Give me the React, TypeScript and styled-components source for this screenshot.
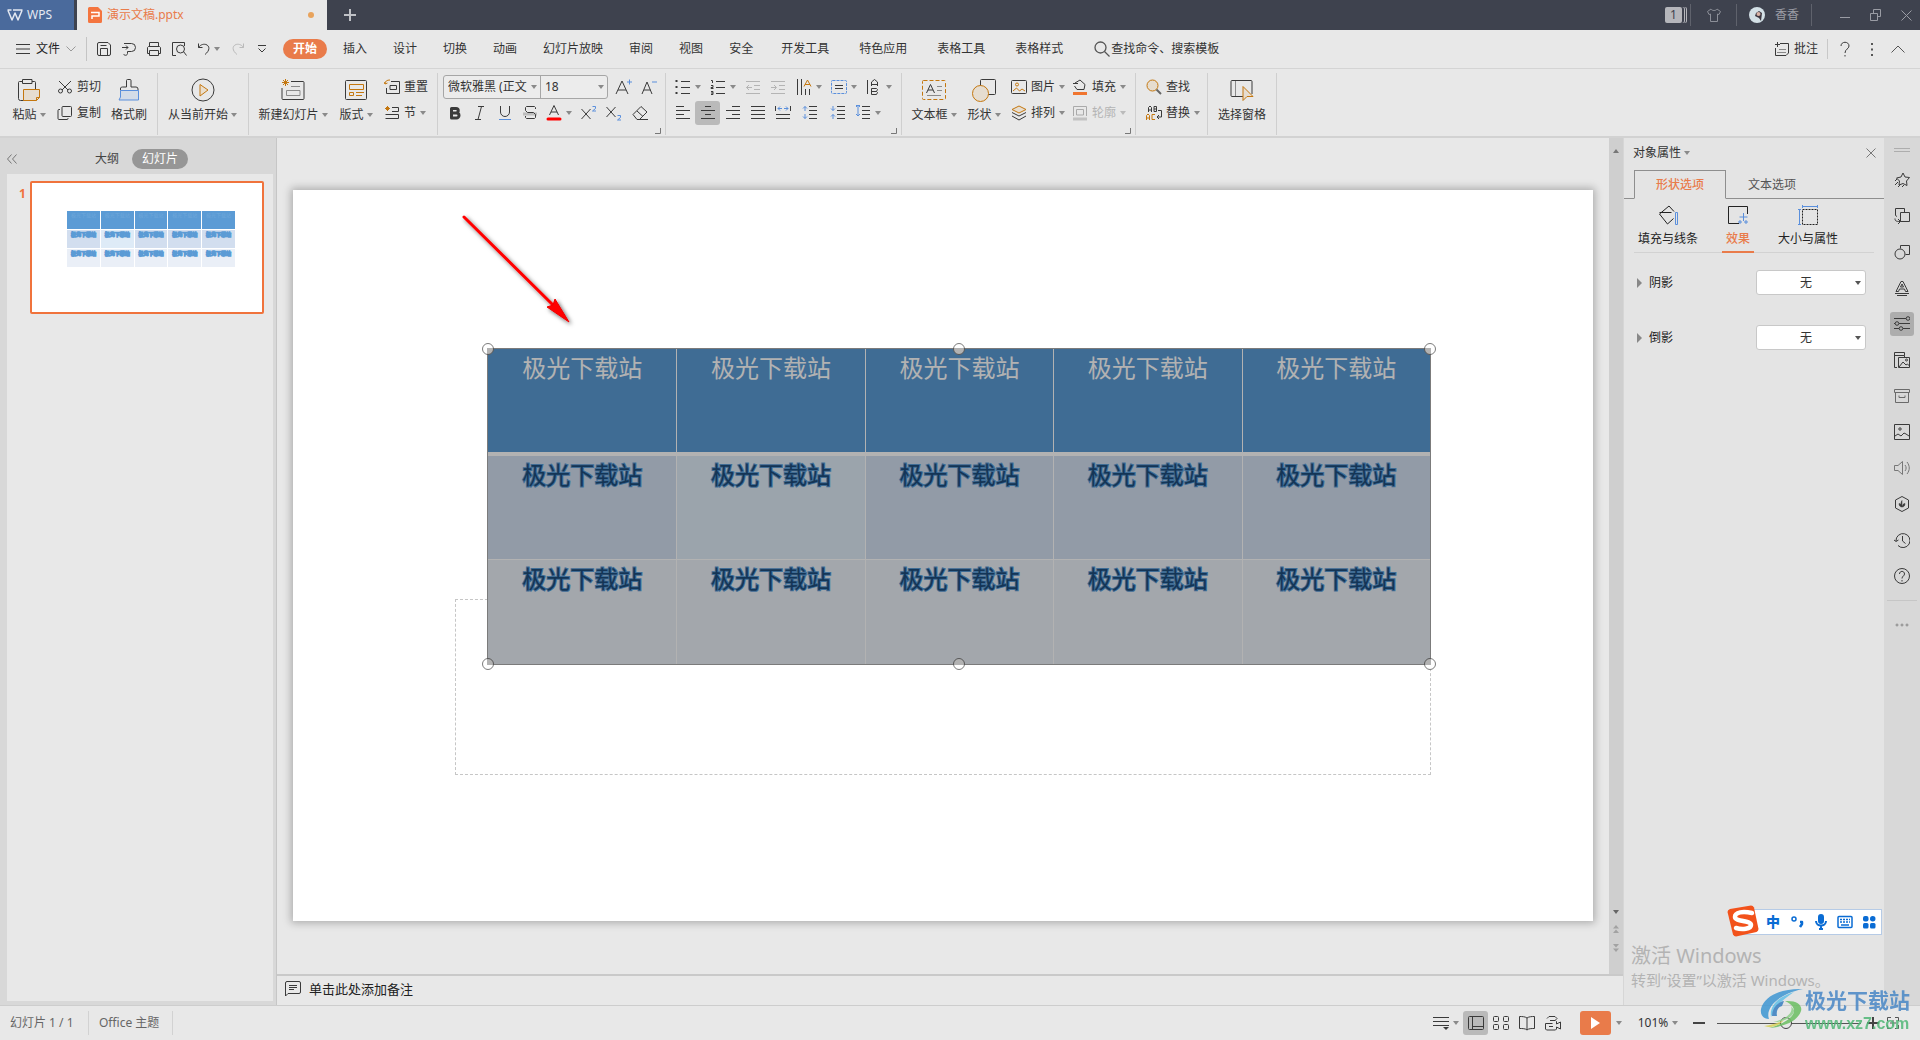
import React from 'react';
import styled, { createGlobalStyle, css } from 'styled-components';

const FONT = '"Noto Sans", "Noto Sans CJK SC", "Liberation Sans", sans-serif';
const INK = '#3a3a3a';
const ORANGE = '#e97b4a';
const AMBER = '#c4770f';
const BLUE = '#5a8fdc';

const Global = createGlobalStyle`
  *, *::before, *::after { box-sizing: border-box; }
  body { margin: 0; overflow: hidden; }
  button, select, input { font: inherit; color: inherit; }
  button { border: 0; padding: 0; background: none; cursor: pointer; }
  svg { display: block; flex: none; }
`;

/* ---------- icons ---------- */

type IconProps = { w?: number; h?: number; c?: string; sw?: number; children: React.ReactNode };
const Icon = ({ w = 16, h = w, c = INK, sw = 1, children }: IconProps) => (
  <svg width={w} height={h} viewBox={`0 0 ${w} ${h}`} fill="none" stroke={c} strokeWidth={sw} strokeLinejoin="round" aria-hidden="true">
    {children}
  </svg>
);

const Caret = ({ c = '#8a8a8a' }: { c?: string }) => (
  <svg width="6" height="4" viewBox="0 0 6 4" aria-hidden="true"><path d="M0 0h6L3 4z" fill={c} /></svg>
);
const Launcher = () => <Icon w={6} c="#777"><path d="M5.500 0v5.500H0" /></Icon>;

const PasteIcon = () => (
  <Icon w={24}>
    <path d="M8 22.500H3.500a2 2 0 0 1-2-2V4.500a1 1 0 0 1 1-1H5M15 3.500h2.500a1 1 0 0 1 1 1V11M5.500 1.500h9.500v4H5.500z" />
    <path d="M6.500 11.500h16v8l-3 3h-13z" stroke={AMBER} fill="#e6ddd0" /><path d="M22.500 19.500h-3v3" stroke={AMBER} />
  </Icon>
);
const CutIcon = () => <Icon><path d="M2 2l9 9M14 2L5 11" /><circle cx="3.500" cy="12" r="2" /><circle cx="12.500" cy="12" r="2" /></Icon>;
const CopyIcon = () => <Icon><path d="M6 1.500h7.500a1 1 0 0 1 1 1v8a1 1 0 0 1-1 1H6a1 1 0 0 1-1-1v-8a1 1 0 0 1 1-1z" /><path d="M3 4.500H2a1 1 0 0 0-1 1v8a1 1 0 0 0 1 1h8a1 1 0 0 0 1-1V13" /></Icon>;
const BrushIcon = () => (
  <Icon w={24}>
    <path d="M3.500 12.500V10a2 2 0 0 1 2-1H9.500V2.500a1 1 0 0 1 1-1h2.500a1 1 0 0 1 1 1V9h5a2 2 0 0 1 2 2v1.500" />
    <path d="M3.500 12.500h18v9.500H2l1.500-3z" stroke={BLUE} fill="#d3dce8" />
  </Icon>
);
const PlayIcon = () => <Icon w={24}><circle cx="12" cy="12" r="11" /><path d="M9 6.500v11.500l8-6z" stroke={AMBER} fill="#eadfce" /></Icon>;
const NewSlideIcon = () => (
  <Icon w={24}>
    <path d="M10 3.500h12a1 1 0 0 1 1 1v16a1 1 0 0 1-1 1H2a1 1 0 0 1-1-1V10" />
    <path d="M10 8.500h9M5.500 12.500h13.500v5H5.500z" stroke="#8b8b8b" />
    <path d="M4.500 1v7M1 4.500h7M2 2l5 5M7 2L2 7" stroke={AMBER} />
  </Icon>
);
const LayoutIcon = () => (
  <Icon w={24}><rect x="1.500" y="2.500" width="21" height="19" rx="1" /><path d="M5.500 6.500h14v5h-14zM5.500 14.500h4v3h-4zM12 14.500h8M12 17.500h6" stroke={AMBER} /></Icon>
);
const ResetIcon = () => <Icon><path d="M7 2.500h8.500v12h-13V9M6 6.500h6.500v4H6z" /><path d="M1 5c0-3 2-4 5-4M1 5L0 3M1 5l2.500-1" stroke={AMBER} /></Icon>;
const SectionIcon = () => <Icon><path d="M8 2.500h6.500v4H8M1.500 9.500h13v4h-13" /><path d="M3.500 1v5M1 3.500h5M2 2l3 3M5 2L2 5" stroke={AMBER} /></Icon>;

const BulletIcon = () => <Icon><path d="M6 2.500h9M6 8.500h9M6 14.500h9" /><path d="M1.500 1v2M1.500 7v2M1.500 13v2" strokeWidth="2" /></Icon>;
const NumberIcon = () => <Icon><path d="M6 2.500h9M6 8.500h9M6 14.500h9M1 1.500h1.500V4M1 6.500h2v2H1v1h2.500M1 12.500h2v3H1M1 14h2" /></Icon>;
const IndentIcon = ({ flip }: { flip?: boolean }) => (
  <Icon c="#b4b4b4"><path d="M1 2.500h14M9 6.500h6M9 10.500h6M1 14.500h14" />{flip ? <path d="M1 8.500h5M4 6l2.500 2.500L4 11" /> : <path d="M7 8.500H1.500M4 6L1.500 8.500 4 11" />}</Icon>
);
const TextDirIcon = () => <Icon><path d="M1.500 0v16M5.500 0v16M9.500 10v6M13.500 10v6" /><path d="M8 7.500l3.500-6.500L15 7.500M9 5.500h5" stroke={AMBER} /></Icon>;
const AlignBoxIcon = () => <Icon><rect x=".5" y="1.500" width="15" height="13" rx="1" stroke={BLUE} strokeDasharray="3 1" /><path d="M4 6.500h8M4 9.500h8" /></Icon>;
const AbIcon = () => <Icon><path d="M1.500 1v14M5.500 7V3L8.500.5l3 2.500v4M5.500 5.500h6M5.500 9.500h5l1 1-1 2 1 1-1 2h-5zM5.500 12.500h5" /></Icon>;
const linePaths: Record<string, string> = {
  left: 'M1 1.500h8M1 5.500h14M1 9.500h8M1 13.500h14',
  center: 'M5 1.500h6M1 5.500h14M5 9.500h6M1 13.500h14',
  right: 'M7 1.500h8M1 5.500h14M7 9.500h8M1 13.500h14',
  full: 'M1 1.500h14M1 5.500h14M1 9.500h14M1 13.500h14',
};
const LinesIcon = ({ kind }: { kind: string }) => <Icon><path d={linePaths[kind]} /></Icon>;
const DistributeIcon = () => <Icon><path d="M.5 1v5M15.500 1v5M1 9.500h14M1 13.500h14" /><path d="M7 3.500H3M5 1.500L3 3.500l2 2M9 3.500h4M11 1.500l2 2-2 2" stroke={BLUE} /></Icon>;
const SpacingIcon = ({ d }: { d: string }) => <Icon><path d="M7 1.500h8M7 5.500h8M7 9.500h8M7 13.500h8" /><path d={d} stroke={BLUE} /></Icon>;
const SPACE_OUT = 'M3 6V1.500M1 3.500L3 1.500l2 2M3 9v4.500M1 11.500l2 2 2-2';
const SPACE_IN = 'M3 1v4.500M1 3.500l2 2 2-2M3 14V9.500M1 11.500l2-2 2 2';
const SPACE_LINE = 'M3 0v11M1 2l2-2 2 2M1 9l2 2 2-2M1 .5h4';

const BoldIcon = () => <Icon sw={3}><path d="M4.500 3.500h4.500a2 2 0 0 1 0 4.500H4.500zM4.500 8h5a2 2 0 0 1 0 5H4.500z" /></Icon>;
const ItalicIcon = () => <Icon><path d="M6 1.500h6M3 14.500h6M9.500 1.500l-3.500 13" /></Icon>;
const UnderlineIcon = () => <Icon><path d="M3.500 1v6a4.500 4.500 0 0 0 9 0V1" /><path d="M2 14.500h12" stroke={BLUE} /></Icon>;
const StrikeIcon = () => (
  <Icon><path d="M1 9h14" stroke="#bdbdbd" strokeWidth="3" /><path d="M13.500 4V2.500l-1-1h-8l-1 1v3l2 2h6l2 2v3l-1 1h-8l-1-1V11" /></Icon>
);
const FontColorIcon = () => <Icon><path d="M3.500 10L8 .5 12.500 10M5 7h6" /><path d="M2 14h12" stroke="#f00" strokeWidth="3" strokeLinecap="round" /></Icon>;
const SupIcon = () => <Icon><path d="M.5 4l9 10M9.500 4l-9 10" /><path d="M11.500 1.500h3v2l-3 2.500h3.500" stroke={BLUE} /></Icon>;
const SubIcon = () => <Icon><path d="M.5 2l9 10M9.500 2l-9 10" /><path d="M11.500 10.500h3v2l-3 2.500h3.500" stroke={BLUE} /></Icon>;
const EraserIcon = () => <Icon><path d="M1 9.500l8-8 6 5.500-7.500 7.500H5zM5 6l6 5.500M5 14.500h11" /></Icon>;
const GrowIcon = () => <Icon w={18}><path d="M1 16L7 3l6 13M3 12h8" /><path d="M12 4h5M14.500 1.500v5" stroke={BLUE} /></Icon>;
const ShrinkIcon = () => <Icon w={18}><path d="M2 16L7 4l5 12M4 12h6.500" /><path d="M12 4h5" stroke={BLUE} /></Icon>;

const TextBoxIcon = () => (
  <Icon w={24}><rect x=".5" y="2.500" width="23" height="19" rx="1" stroke={AMBER} strokeDasharray="4 2" /><path d="M4.500 15L8.500 6.500l4 8.500M6 12h5" /><path d="M15 8.500h5M15 12.500h5M5 17.500h14" stroke="#8b8b8b" /></Icon>
);
const ShapesIcon = () => <Icon w={24}><rect x="8.500" y="1.500" width="15" height="15" rx="1" /><circle cx="8.500" cy="15.500" r="8" stroke={AMBER} fill="#e6ddd0" /></Icon>;
const PictureIcon = () => <Icon><rect x=".5" y="1.500" width="15" height="13" rx="1" /><path d="M2 12l3.500-3 3 3 2.500-2 3 2" stroke={AMBER} /><circle cx="6" cy="5.500" r="1.500" stroke={AMBER} /></Icon>;
const LayersIcon = () => <Icon><path d="M1 7.500L8 11l7-3.500M1 11L8 15l7-4" /><path d="M8 1L1 4.500 8 8l7-3.500z" stroke={AMBER} fill="#e6ddd0" /></Icon>;
const FillIcon = () => <Icon><path d="M3 4l5-3 5 4.500-1 5H5L2.500 7M1 4.500h5" /><path d="M1 14.500h14" stroke="#f0752f" strokeWidth="3" /></Icon>;
const OutlineIcon = () => <Icon c="#aaa"><path d="M1.500 11V1.500h13V11M4.500 10V4.500h7V10z" /><path d="M1 14h14" stroke="#c2c2c2" strokeWidth="3" /></Icon>;
const FindIcon = () => <Icon><circle cx="6.500" cy="6.500" r="5.500" stroke={AMBER} fill="#e6ddd0" /><path d="M10.500 10.500l4.500 4.500" strokeWidth="2" stroke="#666" /></Icon>;
const ReplaceIcon = () => (
  <Icon><path d="M2.500 7V2.500L4 1l1.500 1.500V7M2.500 5h3M8 1.500h2.500v5H8zM8 4h2.500M12 5.500h3.500V12H11M13 10l-2 2 2 2" /><path d="M.5 15v-4.500L2 9l1.500 1.500V15M.5 13h3M9 9.500H6v5h3" stroke={AMBER} /></Icon>
);
const PaneIcon = () => <Icon w={24}><path d="M13 18.500H2a1 1 0 0 1-1-1v-14a1 1 0 0 1 1-1h19a1 1 0 0 1 1 1V16" /><path d="M5.500 3v15" stroke="#8b8b8b" /><path d="M13 8.500v14l4-4h6z" stroke={AMBER} fill="#e6ddd0" /></Icon>;

/* ---------- shell ---------- */

const Shell = styled.div`
  position: relative;
  display: grid;
  grid-template-rows: 30px 39px 69px 1fr 35px;
  height: 100vh;
  min-width: 1280px;
  overflow: hidden;
  background: #e8e8e8;
  color: #333;
  font: 12px/16px ${FONT};
`;

const TitleBar = styled.header`
  display: flex;
  background: #3e424e;
`;
const HomeTab = styled.button`
  display: flex;
  align-items: center;
  gap: 4px;
  width: 74px;
  margin-right: 3px;
  padding-left: 7px;
  background: #4a6a9c;
  color: #e4e9f2;
`;
const DocTab = styled.div`
  display: flex;
  align-items: center;
  gap: 5px;
  width: 250px;
  padding: 0 13px 0 11px;
  background: #e8e8e8;
  color: ${ORANGE};
`;
const Unsaved = styled.span`
  width: 6px;
  height: 6px;
  margin-left: auto;
  border-radius: 50%;
  background: #e8a35c;
`;
const NewTab = styled.button`
  display: grid;
  place-items: center;
  width: 46px;
`;
const TitleRight = styled.div`
  display: flex;
  align-items: center;
  margin-left: auto;
  color: #9a9ca4;
`;
const WindowControls = styled.div`
  display: flex;
  padding-left: 18px;
`;
const TitleItem = styled.button<{ $w: number; $rule?: boolean }>`
  display: flex;
  align-items: center;
  justify-content: center;
  gap: 10px;
  width: ${p => p.$w}px;
  height: 22px;
  border-right: ${p => (p.$rule ? '1px solid #5f626c' : '0')};
`;
const CountBadge = styled.span`
  display: flex;
  align-items: center;
  justify-content: center;
  width: 17px;
  height: 16px;
  border-radius: 2px;
  background: #b5b6bb;
  box-shadow: 2px 0 0 #3e424e, 3px 0 0 #b5b6bb, 4px 0 0 #3e424e, 5px 0 0 #b5b6bb;
  color: #3e424e;
`;

const MenuBar = styled.nav`
  display: flex;
  align-items: center;
  padding: 0 8px 0 15px;
  border-bottom: 1px solid #d4d4d4;
`;
const FileButton = styled.button`
  display: flex;
  align-items: center;
  gap: 6px;
  width: 72px;
  height: 24px;
  color: #222;
  border-right: 1px solid #c4c4c4;
`;
const QuickTools = styled.div`
  display: flex;
  padding-left: 4px;
`;
const QuickButton = styled.button<{ $w?: number }>`
  display: flex;
  align-items: center;
  justify-content: center;
  gap: 3px;
  width: ${p => p.$w ?? 25}px;
  height: 24px;
`;
const Tabs = styled.div`
  display: flex;
  flex: 1;
  align-items: center;
  padding-left: 9px;
`;
const MenuTab = styled.button<{ $wide?: boolean; $on?: boolean }>`
  height: 20px;
  padding: 0 ${p => (p.$wide ? 15 : 13)}px;
  white-space: nowrap;
  line-height: 20px;
  ${p => p.$on && css`
    margin-right: 3px;
    padding: 0 10px;
    border-radius: 10px;
    background: ${ORANGE};
    color: #fff;
    font-weight: 700;
  `}
`;
const SearchBox = styled.label`
  display: flex;
  align-items: center;
  gap: 1px;
  margin-left: 16px;
`;
const SearchInput = styled.input`
  width: 130px;
  padding: 0;
  border: 0;
  outline: 0;
  background: none;
  &::placeholder { color: #333; opacity: 1; }
`;
const CommentButton = styled.button`
  display: flex;
  align-items: center;
  gap: 4px;
  height: 20px;
  padding-right: 9px;
  margin-right: 2px;
  border-right: 1px solid #c8c8c8;
`;

/* ---------- ribbon ---------- */

const Ribbon = styled.div`
  display: flex;
  padding-top: 4px;
  border-bottom: 2px solid #d2d2d2;
`;
const Group = styled.section<{ $w: number; $l?: number }>`
  position: relative;
  display: flex;
  flex: none;
  width: ${p => p.$w}px;
  height: 62px;
  padding: 2px 0 0 ${p => p.$l ?? 8}px;
  border-right: 1px solid #cfcfcf;
`;
const Corner = styled.button`
  position: absolute;
  right: 4px;
  bottom: 1px;
`;
const Big = styled.button<{ $w: number }>`
  display: flex;
  flex-direction: column;
  align-items: center;
  gap: 5px;
  width: ${p => p.$w}px;
  padding-top: 3px;
`;
const Label = styled.span`
  display: flex;
  align-items: center;
  gap: 3px;
  white-space: nowrap;
`;
const Stack = styled.div<{ $w?: number; $l?: number }>`
  display: flex;
  flex-direction: column;
  gap: 2px;
  width: ${p => (p.$w ? `${p.$w}px` : 'auto')};
  padding-left: ${p => p.$l ?? 0}px;
`;
const Row = styled.div`
  display: flex;
  align-items: center;
  height: 24px;
`;
const Small = styled.button<{ $off?: boolean }>`
  display: flex;
  align-items: center;
  gap: 4px;
  height: 24px;
  white-space: nowrap;
  color: ${p => (p.$off ? '#b4b4b4' : 'inherit')};
`;
const Tool = styled.button<{ $w?: number; $on?: boolean }>`
  display: flex;
  align-items: center;
  justify-content: center;
  gap: 4px;
  flex: none;
  width: ${p => p.$w ?? 25}px;
  height: 24px;
  border-radius: 3px;
  background: ${p => (p.$on ? '#bababa' : 'none')};
`;
const Combo = styled.div`
  display: flex;
  width: 165px;
  height: 24px;
  margin-right: 3px;
  border: 1px solid #a6a6a6;
  border-radius: 3px;
  background: #ececec;
`;
const ComboPart = styled.label<{ $w: number; $rule?: boolean }>`
  display: flex;
  align-items: center;
  width: ${p => p.$w}px;
  padding: 0 3px 0 4px;
  border-right: ${p => (p.$rule ? '1px solid #a6a6a6' : '0')};
`;
const PlainSelect = styled.select<{ $center?: boolean }>`
  flex: 1;
  min-width: 0;
  height: 20px;
  padding: 0;
  border: 0;
  outline: 0;
  appearance: none;
  background: none;
  text-align: ${p => (p.$center ? 'center' : 'left')};
  text-align-last: ${p => (p.$center ? 'center' : 'left')};
`;

/* ---------- workspace ---------- */

const Work = styled.main`
  display: grid;
  grid-template-columns: 277px minmax(0, 1fr) 261px 36px;
  min-height: 0;
`;
const Outline = styled.aside`
  display: flex;
  flex-direction: column;
  padding: 0 3px 4px 7px;
  border-right: 1px solid #c6c6c6;
  background: #d8d8d8;
`;
const OutlineHead = styled.div`
  display: flex;
  align-items: center;
  gap: 3px;
  height: 36px;
  padding-top: 6px;
`;
const OutlineTab = styled.button<{ $on?: boolean }>`
  height: 20px;
  padding: 0 10px;
  border-radius: 10px;
  background: ${p => (p.$on ? '#969696' : 'none')};
  color: ${p => (p.$on ? '#fff' : '#444')};
`;
const Collapse = styled.button`
  margin-right: 65px;
`;
const ThumbList = styled.div`
  display: flex;
  flex: 1;
  gap: 4px;
  align-items: flex-start;
  padding: 7px 9px 0 12px;
  background: #e8e8e8;
  color: #f0733c;
  font-weight: 700;
`;
const ThumbNo = styled.span`
  width: 7px;
  padding-top: 5px;
`;
const Thumb = styled.button`
  display: flex;
  align-items: flex-start;
  flex: 1;
  height: 133px;
  border: 2px solid #f0733c;
  border-radius: 2px;
  background: #fff;
  padding: 28px 27px 0 35px;
`;
const MiniTable = styled.span`
  display: grid;
  flex: 1;
  grid-template-columns: repeat(5, minmax(0, 1fr));
  grid-auto-rows: 18px;
  gap: 1px;
`;
const MiniCell = styled.span<{ $bg: string; $head?: boolean }>`
  overflow: hidden;
  background: ${p => p.$bg};
  color: ${p => (p.$head ? '#6ea7da' : '#5b9bd5')};
  font-size: 5px;
  line-height: 8px;
  text-align: center;
  white-space: nowrap;
  font-weight: ${p => (p.$head ? 400 : 900)};
  -webkit-text-stroke: ${p => (p.$head ? '0' : '1px #5b9bd5')};
`;

const Center = styled.section`
  display: grid;
  grid-template-rows: minmax(0, 1fr) 31px;
`;
const Stage = styled.div`
  display: grid;
  grid-template-columns: minmax(0, 1fr) 14px;
`;
const Desk = styled.div`
  display: flex;
  align-items: center;
  justify-content: center;
  padding: 0 16px 2px;
`;
const Slide = styled.div`
  position: relative;
  width: 100%;
  aspect-ratio: 1300 / 731;
  background: #fff;
  box-shadow: 0 0 8px 2px rgba(0, 0, 0, 0.26);
`;
const pct = (v: number, of: number) => `${(v / of) * 100}%`;
const Floating = styled.div<{ $x: number; $y: number; $w: number; $h: number }>`
  position: absolute;
  left: ${p => pct(p.$x, 1300)};
  top: ${p => pct(p.$y, 731)};
  width: ${p => pct(p.$w, 1300)};
  height: ${p => pct(p.$h, 731)};
`;
const Placeholder = styled(Floating)`
  border: 1px dashed #c6c6c6;
`;
const Selection = styled(Floating)`
  border: 1px solid #b0b0b0;
  &::after {
    content: '';
    position: absolute;
    inset: -1px;
    background: rgba(0, 0, 0, 0.3);
    pointer-events: none;
  }
`;
const Handle = styled.span<{ $x: number; $y: number }>`
  position: absolute;
  left: ${p => p.$x}%;
  top: ${p => p.$y}%;
  width: 12px;
  height: 12px;
  margin: -6px 0 0 -6px;
  border: 1px solid #7c7c7c;
  border-radius: 50%;
  background: #fff;
`;
const SlideTable = styled.table`
  width: 100%;
  height: 100%;
  table-layout: fixed;
  border-spacing: 0;
  font-size: 24px;
  line-height: 34px;
`;
const HeadCell = styled.th`
  height: 34%;
  padding: 2px 0 0;
  vertical-align: top;
  border-bottom: 4px solid #fff;
  background: #5b9bd5;
  color: #fff;
  font-weight: 400;
  & + & { border-left: 1px solid #fff; }
`;
const BodyCell = styled.td<{ $bg: string }>`
  height: 33%;
  padding: 2px 0 0;
  vertical-align: top;
  text-align: center;
  border-bottom: 1px solid #fff;
  background: ${p => p.$bg};
  color: #1d4d7c;
  -webkit-text-stroke: 2px #5b9bd5;
  paint-order: stroke fill;
  & + & { border-left: 1px solid #fff; }
  tr:last-child > & { border-bottom: 0; }
`;
const Scroll = styled.div`
  display: flex;
  flex-direction: column;
  align-items: center;
  gap: 11px;
  padding: 11px 0 22px;
  background: #cfcfcf;
`;
const ScrollButton = styled.button<{ $end?: boolean }>`
  margin-top: ${p => (p.$end ? 'auto' : '0')};
`;
const Notes = styled.label`
  display: flex;
  align-items: center;
  gap: 8px;
  padding: 0 8px 4px;
  border-top: 2px solid #c9c9c9;
`;
const NotesInput = styled.input`
  flex: 1;
  padding: 0;
  border: 0;
  outline: 0;
  background: none;
  font-size: 13px;
  &::placeholder { color: #222; opacity: 1; }
`;

const Props = styled.aside`
  border-left: 1px solid #d6d6d6;
  background: #e4e4e4;
`;
const PropsHead = styled.div`
  display: flex;
  align-items: center;
  justify-content: space-between;
  height: 32px;
  padding: 0 8px 2px 9px;
`;
const PropsTabs = styled.div`
  display: flex;
  height: 29px;
  padding-left: 10px;
  box-shadow: inset 0 -1px #8e8e8e;
`;
const PropsTab = styled.button<{ $on?: boolean }>`
  width: 92px;
  border: 1px solid ${p => (p.$on ? '#8e8e8e' : 'transparent')};
  border-bottom-color: ${p => (p.$on ? '#e4e4e4' : 'transparent')};
  color: ${p => (p.$on ? ORANGE : '#555')};
  font-weight: ${p => (p.$on ? 500 : 400)};
`;
const SubTabs = styled.div`
  display: flex;
  justify-content: space-between;
  height: 54px;
  margin: 0 10px;
  padding: 0 36px 0 4px;
  border-bottom: 1px solid #d2d2d2;
`;
const SubTab = styled.button<{ $on?: boolean }>`
  display: flex;
  flex-direction: column;
  align-items: center;
  gap: 6px;
  height: 54px;
  padding: 6px 4px 0;
  margin: 0 -4px;
  border-bottom: 2px solid ${p => (p.$on ? ORANGE : 'transparent')};
  color: ${p => (p.$on ? ORANGE : '#222')};
  font-weight: ${p => (p.$on ? 500 : 400)};
`;
const PropRow = styled.div`
  display: flex;
  align-items: center;
  justify-content: space-between;
  height: 25px;
  margin: 17px 18px 30px 13px;
`;
const PropLabel = styled.label`
  display: flex;
  align-items: center;
  gap: 7px;
  color: #222;
`;
const PropSelect = styled.div`
  display: flex;
  align-items: center;
  width: 110px;
  height: 25px;
  padding: 0 4px 0 0;
  border: 1px solid #c8c8c8;
  border-radius: 3px;
  background: #fff;
`;

const Rail = styled.aside`
  display: flex;
  flex-direction: column;
  align-items: center;
  gap: 12px;
  padding-top: 10px;
  background: #d8d8d8;
`;
const RailButton = styled.button<{ $on?: boolean }>`
  display: grid;
  place-items: center;
  width: 24px;
  height: 24px;
  border-radius: 3px;
  background: ${p => (p.$on ? '#adadad' : 'none')};
`;
const RailGrip = styled.span`
  width: 16px;
  height: 4px;
  margin-bottom: 4px;
  border: solid #adadad;
  border-width: 1px 0;
`;
const RailRule = styled.span`
  width: 30px;
  height: 1px;
  background: #c6c6c6;
`;

const Status = styled.footer`
  display: flex;
  align-items: center;
  padding-right: 15px;
  border-top: 1px solid #cdcdcd;
  color: #666;
`;
const StatusText = styled.span<{ $w: number }>`
  width: ${p => p.$w}px;
  height: 24px;
  padding-left: 10px;
  line-height: 24px;
  border-right: 1px solid #d2d2d2;
`;
const StatusTools = styled.div`
  display: flex;
  align-items: center;
  margin-left: auto;
  color: #333;
`;
const ShowButton = styled.button`
  display: grid;
  place-items: center;
  width: 31px;
  height: 24px;
  margin: 0 0 0 13px;
  border-radius: 3px;
  background: ${ORANGE};
`;
const ZoomSlider = styled.input`
  width: 144px;
  height: 14px;
  margin: 0 4px 0 8px;
  appearance: none;
  background: linear-gradient(#555, #555) center / 100% 1px no-repeat;
  &::-webkit-slider-thumb {
    appearance: none;
    width: 12px;
    height: 12px;
    border: 1px solid #444;
    border-radius: 50%;
    background: #e8e8e8;
  }
`;

/* ---------- desktop overlays ---------- */

const Activate = styled.div`
  position: absolute;
  right: 96px;
  bottom: 48px;
  width: 193px;
  color: #b3b3b3;
  font-size: 15px;
  line-height: 24px;
  white-space: nowrap;
  pointer-events: none;
`;
const ActivateTitle = styled.div`
  font-size: 20px;
`;
const Ime = styled.div`
  position: absolute;
  right: 38px;
  bottom: 105px;
  display: flex;
  align-items: center;
  height: 26px;
  padding-left: 20px;
  border: 1px solid #b6cbe6;
  background: #fff;
  color: #0a6cd4;
`;
const ImeLogo = styled.span`
  position: absolute;
  left: -14px;
  top: -5px;
`;
const ImeButton = styled.button`
  display: grid;
  place-items: center;
  width: 24px;
  height: 24px;
  font-size: 14px;
  font-weight: 900;
`;
const Stamp = styled.div`
  position: absolute;
  right: 10px;
  bottom: 6px;
  display: flex;
  pointer-events: none;
  opacity: 0.86;
`;
const StampName = styled.div`
  color: #4a88c6;
  font-size: 21px;
  line-height: 24px;
  font-weight: 700;
  white-space: nowrap;
`;
const StampUrl = styled.div`
  padding-top: 2px;
  color: #52b878;
  font: 700 16px/20px "Liberation Sans", sans-serif;
`;

/* ---------- data ---------- */

const MENU = ['插入', '设计', '切换', '动画', '幻灯片放映', '审阅', '视图', '安全'];
const WIDE_MENU = ['开发工具', '特色应用', '表格工具', '表格样式'];
const COLS = [0, 1, 2, 3, 4];
const CELL = '极光下载站';
const bandColor = (row: number, col: number) => (row === 1 ? '#eaeff7' : col === 1 ? '#deebf7' : '#d2deef');

const RAIL: { name: string; on?: boolean; icon: React.ReactNode }[] = [
  { name: '动画', icon: <Icon><path d="M9 1l2 4 4.500.5-3 3.500.5 4.500L9 11.500 5 13l.5-4L2.500 6l4.500-1zM1 9l2-2M1 13l3-3M4 15l2-2M8 15l2-2" /></Icon> },
  { name: '切换', icon: <Icon><path d="M3 8.500l-1.500-1v-7h9V4M6.500 4.500h9v9h-9zM1 10.500c0 2.500 1 3 5 3M4 11l2.500 2.500L4 16" /></Icon> },
  { name: '形状', icon: <Icon><path d="M6.500 4.500v-3h9v9h-4" /><circle cx="6" cy="10" r="5" /></Icon> },
  { name: '艺术字', icon: <Icon><path d="M2 11.500L7 1.500h2l5 10h-2.500L10.500 9h-5l-1 2.500zM6.500 7h3L8 4zM1 13.500h14M3 15.500h10" /></Icon> },
  { name: '属性', on: true, icon: <Icon><path d="M0 2.500h12M5 7.500h11M0 12.500h5M9 12.500h7M0 7.500h1" /><circle cx="14" cy="2.500" r="1.800" /><circle cx="3" cy="7.500" r="1.800" /><circle cx="7" cy="12.500" r="1.800" /></Icon> },
  { name: '模板', icon: <Icon><path d="M3 15.500H.5V.5h10v3H.5M10.500 3.500V5M4.500 5.500h11v10h-11zM5 15l4-5 3 3 1.500-1 2 2" /><circle cx="12.500" cy="8" r="1" /></Icon> },
  { name: '归档', icon: <Icon c="#6a6a6a"><path d="M.5 1.500h15v3H.5zM1.500 4.500v10h13v-10M5 7.500v2h6v-2" /></Icon> },
  { name: '图片', icon: <Icon><path d="M.5.5h15v15H.5zM1 12l3-2 3 2 3-3 2 1 3 2" /><circle cx="6" cy="5" r="1.200" /></Icon> },
  { name: '音频', icon: <Icon c="#777"><path d="M.5 5.500H4l4.500-4v13L4 10.500H.500zM11 5c1.500 2 1.500 4 0 6M13 2c3 4 3 8 0 12" /></Icon> },
  { name: '资源', icon: <Icon><path d="M8 .5l6.500 3.500v8L8 15.500 1.500 12V4z" /><path d="M8 11V4.500c-1.500 2-1 4 0 6.500M8 11C7.500 8.500 6.500 7.500 5 7.500c0 2 1 3.500 3 3.500zM8 11c.5-2.500 1.500-3.500 3-3.500 0 2-1 3.500-3 3.500z" fill={INK} strokeWidth=".5" /></Icon> },
  { name: '历史', icon: <Icon><path d="M2 9a7 7 0 1 1 2 4.500M0 8l2 1.500L4.500 8M8.500 4v5l3 2.500" /></Icon> },
  { name: '帮助', icon: <Icon><circle cx="8" cy="8" r="7.500" /><path d="M5.500 6c0-3.500 5-3.500 5 0 0 2-2.500 2-2.500 4.500M8 12v1.500" /></Icon> },
];

/* ---------- parts ---------- */

const BigButton = ({ w, icon, label, caret }: { w: number; icon: React.ReactNode; label: string; caret?: boolean }) => (
  <Big $w={w}>{icon}<Label>{label}{caret && <Caret />}</Label></Big>
);
const SmallButton = ({ icon, label, caret, off }: { icon: React.ReactNode; label: string; caret?: boolean; off?: boolean }) => (
  <Small $off={off}>{icon}{label}{caret && <Caret c={off ? '#bbb' : undefined} />}</Small>
);

function Title() {
  return (
    <TitleBar>
      <HomeTab>
        <Icon w={16} h={12} c="#e4e9f2" sw={1.5}><path d="M.5 1h4M1 1.500L5 11l3-7 3 7 4-9.500M6 1h9.500" /></Icon>WPS
      </HomeTab>
      <DocTab>
        <svg width="14" height="16" viewBox="0 0 14 16" aria-hidden="true">
          <path d="M1.500 0H10l4 4v10.500a1.500 1.500 0 0 1-1.500 1.500h-11A1.500 1.500 0 0 1 0 14.500v-13A1.500 1.500 0 0 1 1.500 0z" fill="#f4753f" />
          <path d="M3 5.500h8V9H4v3" fill="none" stroke="#fff" strokeWidth="1.500" />
        </svg>
        演示文稿.pptx<Unsaved />
      </DocTab>
      <NewTab aria-label="新建标签"><Icon w={12} c="#bfc1c6" sw={2}><path d="M6 0v12M0 6h12" /></Icon></NewTab>
      <TitleRight>
        <TitleItem $w={34} $rule><CountBadge>1</CountBadge></TitleItem>
        <TitleItem $w={46} $rule aria-label="皮肤"><Icon w={14} c="#8c8f98"><path d="M4 1L.5 3.500 2 6.500l1.500-.5v7.500h7V6l1.500.5 1.500-3L10 1C9 3 5 3 4 1z" /></Icon></TitleItem>
        <TitleItem $w={75} $rule>
          <svg width="16" height="16" viewBox="0 0 16 16" aria-hidden="true"><circle cx="8" cy="8" r="8" fill="#d3e0e6" /><path d="M7 6l3-2 3 2-1 8-2-3-4-2z" fill="#3b3640" /><circle cx="9.500" cy="7" r="2" fill="#d9b3a6" /></svg>
          香香
        </TitleItem>
        <WindowControls>
          <TitleItem $w={30} aria-label="最小化"><Icon w={10} c="#9a9ca4"><path d="M0 7.500h10" /></Icon></TitleItem>
          <TitleItem $w={32} aria-label="还原"><Icon w={12} c="#9a9ca4"><path d="M.5 4.500h7v7h-7zM3.500 4V.5h7v7H8" /></Icon></TitleItem>
          <TitleItem $w={28} aria-label="关闭"><Icon w={11} c="#9a9ca4"><path d="M.5.5l10 10M10.500.5l-10 10" /></Icon></TitleItem>
        </WindowControls>
      </TitleRight>
    </TitleBar>
  );
}

function Menu() {
  return (
    <MenuBar>
      <FileButton>
        <Icon w={15} h={10}><path d="M1 .5h14M1 5h14M1 9.500h14" /></Icon>文件
        <Icon w={10} h={6} c="#999"><path d="M.5.5L5 5 9.500.5" /></Icon>
      </FileButton>
      <QuickTools>
        <QuickButton aria-label="保存"><Icon><path d="M1.500 3a1.500 1.500 0 0 1 1.500-1.500h9l2.500 2.500v9a1.500 1.500 0 0 1-1.500 1.500H3A1.500 1.500 0 0 1 1.500 13zM4.500 14V7.500h7V14M4.500 4.500h6" /></Icon></QuickButton>
        <QuickButton aria-label="输出"><Icon><path d="M3 2.500h7.500a3.500 3.500 0 0 1 0 8H6.500M1 6.500h6M5 4.500l2 2-2 2M6.500 10.500v2c0 2-3 2.500-4 .5" /></Icon></QuickButton>
        <QuickButton aria-label="打印"><Icon><path d="M3.500 5V1.500h9V5M3 12.500H1.500v-6l1-1h11l1 1v6H13M3.500 9.500h9v5h-9z" /></Icon></QuickButton>
        <QuickButton aria-label="打印预览"><Icon><path d="M5 14.500H1.500v-13h12V5M12.500 10.500l3 4" /><circle cx="9.500" cy="8" r="4" /></Icon></QuickButton>
        <QuickButton $w={35} aria-label="撤销"><Icon w={14} h={14}><path d="M1.500 1.500v4h4M1.500 5.500C4 2 7 2 9 2.500c4 1.500 4 6-1 10" /></Icon><Caret /></QuickButton>
        <QuickButton $w={23} aria-label="恢复"><Icon w={14} h={14} c="#bababa"><path d="M12.500 1.500v4h-4M12.500 5.500C10 2 7 2 5 2.500c-4 1.500-4 6 1 10" /></Icon></QuickButton>
        <QuickButton aria-label="自定义"><Icon w={8} h={8}><path d="M0 .5h8M.5 3.500L4 7l3.500-3.500" /></Icon></QuickButton>
      </QuickTools>
      <Tabs>
        <MenuTab $on>开始</MenuTab>
        {MENU.map(m => <MenuTab key={m}>{m}</MenuTab>)}
        {WIDE_MENU.map(m => <MenuTab key={m} $wide>{m}</MenuTab>)}
        <SearchBox>
          <Icon c="#555" sw={1.3}><circle cx="6.500" cy="6.500" r="5.500" /><path d="M10.500 10.500l5 5" /></Icon>
          <SearchInput aria-label="查找命令" placeholder="查找命令、搜索模板" />
        </SearchBox>
      </Tabs>
      <CommentButton><Icon><path d="M6 2.500h8.500V12l-2.500 2.500H1.500V7M3.500 1v5M1 3.500h5" /><path d="M5 8.500h7M3 11.500h9" stroke="#888" /></Icon>批注</CommentButton>
      <QuickButton $w={30} aria-label="帮助"><Icon w={10} h={16}><path d="M1 5c0-5 8-5 8 0 0 3-4 3-4 7M5 14v1.500" /></Icon></QuickButton>
      <QuickButton $w={24} aria-label="更多"><Icon w={2} h={13} c="#555"><path d="M1 0v2M1 5.500v2M1 11v2" strokeWidth="2" /></Icon></QuickButton>
      <QuickButton $w={28} aria-label="收起功能区"><Icon w={14} h={8} c="#555"><path d="M.5 7.500L7 1l6.500 6.500" /></Icon></QuickButton>
    </MenuBar>
  );
}

function RibbonBar() {
  return (
    <Ribbon>
      <Group $w={158} $l={6}>
        <BigButton w={46} icon={<PasteIcon />} label="粘贴" caret />
        <Stack $w={54} $l={5}>
          <Row><SmallButton icon={<CutIcon />} label="剪切" /></Row>
          <Row><SmallButton icon={<CopyIcon />} label="复制" /></Row>
        </Stack>
        <BigButton w={46} icon={<BrushIcon />} label="格式刷" />
      </Group>
      <Group $w={91}><BigButton w={73} icon={<PlayIcon />} label="从当前开始" caret /></Group>
      <Group $w={189} $l={5}>
        <BigButton w={78} icon={<NewSlideIcon />} label="新建幻灯片" caret />
        <BigButton w={48} icon={<LayoutIcon />} label="版式" caret />
        <Stack $l={4}>
          <Row><SmallButton icon={<ResetIcon />} label="重置" /></Row>
          <Row><SmallButton icon={<SectionIcon />} label="节" caret /></Row>
        </Stack>
      </Group>
      <Group $w={228} $l={5}>
        <Stack>
          <Row>
            <Combo>
              <ComboPart $w={97} $rule><PlainSelect aria-label="字体"><option>微软雅黑 (正文</option></PlainSelect><Caret /></ComboPart>
              <ComboPart $w={66}><PlainSelect aria-label="字号"><option>18</option></PlainSelect><Caret /></ComboPart>
            </Combo>
            <Tool aria-label="增大字号"><GrowIcon /></Tool>
            <Tool aria-label="减小字号"><ShrinkIcon /></Tool>
          </Row>
          <Row>
            <Tool $w={24} aria-label="加粗"><BoldIcon /></Tool>
            <Tool aria-label="倾斜"><ItalicIcon /></Tool>
            <Tool aria-label="下划线"><UnderlineIcon /></Tool>
            <Tool aria-label="删除线"><StrikeIcon /></Tool>
            <Tool $w={34} aria-label="字体颜色"><FontColorIcon /><Caret /></Tool>
            <Tool aria-label="上标"><SupIcon /></Tool>
            <Tool aria-label="下标"><SubIcon /></Tool>
            <Tool $w={28} aria-label="清除格式"><EraserIcon /></Tool>
          </Row>
        </Stack>
        <Corner aria-label="字体设置"><Launcher /></Corner>
      </Group>
      <Group $w={236} $l={4}>
        <Stack>
          <Row>
            <Tool $w={36} aria-label="项目符号"><BulletIcon /><Caret /></Tool>
            <Tool $w={34} aria-label="编号"><NumberIcon /><Caret /></Tool>
            <Tool aria-label="减少缩进"><IndentIcon /></Tool>
            <Tool aria-label="增加缩进"><IndentIcon flip /></Tool>
            <Tool $w={38} aria-label="文字方向"><TextDirIcon /><Caret /></Tool>
            <Tool $w={32} aria-label="对齐文本"><AlignBoxIcon /><Caret /></Tool>
            <Tool $w={38} aria-label="文字排列"><AbIcon /><Caret /></Tool>
          </Row>
          <Row>
            <Tool aria-label="左对齐"><LinesIcon kind="left" /></Tool>
            <Tool $on aria-label="居中"><LinesIcon kind="center" /></Tool>
            <Tool aria-label="右对齐"><LinesIcon kind="right" /></Tool>
            <Tool aria-label="两端对齐"><LinesIcon kind="full" /></Tool>
            <Tool aria-label="分散对齐"><DistributeIcon /></Tool>
            <Tool $w={30} aria-label="增加段距"><SpacingIcon d={SPACE_OUT} /></Tool>
            <Tool aria-label="减少段距"><SpacingIcon d={SPACE_IN} /></Tool>
            <Tool $w={36} aria-label="行距"><SpacingIcon d={SPACE_LINE} /><Caret /></Tool>
          </Row>
        </Stack>
        <Corner aria-label="段落设置"><Launcher /></Corner>
      </Group>
      <Group $w={234} $l={6}>
        <BigButton w={52} icon={<TextBoxIcon />} label="文本框" caret />
        <BigButton w={48} icon={<ShapesIcon />} label="形状" caret />
        <Stack $w={64} $l={3}>
          <Row><SmallButton icon={<PictureIcon />} label="图片" caret /></Row>
          <Row><SmallButton icon={<LayersIcon />} label="排列" caret /></Row>
        </Stack>
        <Stack>
          <Row><SmallButton icon={<FillIcon />} label="填充" caret /></Row>
          <Row><SmallButton icon={<OutlineIcon />} label="轮廓" caret off /></Row>
        </Stack>
        <Corner aria-label="形状设置"><Launcher /></Corner>
      </Group>
      <Group $w={72} $l={10}>
        <Stack>
          <Row><SmallButton icon={<FindIcon />} label="查找" /></Row>
          <Row><SmallButton icon={<ReplaceIcon />} label="替换" caret /></Row>
        </Stack>
      </Group>
      <Group $w={69}><BigButton w={52} icon={<PaneIcon />} label="选择窗格" /></Group>
    </Ribbon>
  );
}

function OutlinePane() {
  return (
    <Outline>
      <OutlineHead>
        <Collapse aria-label="收起"><Icon w={10} h={10} c="#777"><path d="M4.500.5L.5 5l4 4.500M9.500.5L5.500 5l4 4.500" /></Icon></Collapse>
        <OutlineTab>大纲</OutlineTab>
        <OutlineTab $on>幻灯片</OutlineTab>
      </OutlineHead>
      <ThumbList>
        <ThumbNo>1</ThumbNo>
        <Thumb>
          <MiniTable>
            {COLS.map(c => <MiniCell key={c} $bg="#5b9bd5" $head>{CELL}</MiniCell>)}
            {[0, 1].map(r => COLS.map(c => <MiniCell key={`${r}${c}`} $bg={bandColor(r, c)}>{CELL}</MiniCell>))}
          </MiniTable>
        </Thumb>
      </ThumbList>
    </Outline>
  );
}

function Canvas() {
  return (
    <Center>
      <Stage>
        <Desk>
          <Slide>
            <Placeholder $x={162} $y={409} $w={976} $h={176} />
            <Selection $x={194} $y={158} $w={944} $h={317}>
              <SlideTable>
                <tbody>
                  <tr>{COLS.map(c => <HeadCell key={c} scope="col">{CELL}</HeadCell>)}</tr>
                  {[0, 1].map(r => <tr key={r}>{COLS.map(c => <BodyCell key={c} $bg={bandColor(r, c)}>{CELL}</BodyCell>)}</tr>)}
                </tbody>
              </SlideTable>
              {[0, 50, 100].map(x => [0, 100].map(y => <Handle key={`${x}-${y}`} $x={x} $y={y} />))}
            </Selection>
            <Floating $x={167} $y={20} $w={120} $h={120}>
              <svg width="100%" height="100%" viewBox="0 0 120 120" aria-hidden="true">
                <defs><filter id="arrowShadow"><feDropShadow dx="2" dy="2" stdDeviation="2" floodColor="#000" floodOpacity="0.6" /></filter></defs>
                <g filter="url(#arrowShadow)">
                  <path d="M4 7l90 89" stroke="#f00" strokeWidth="3" strokeLinecap="round" />
                  <path d="M109 112L87 97l6-2 2-6z" fill="#f00" stroke="#e00" strokeWidth="1" />
                </g>
              </svg>
            </Floating>
          </Slide>
        </Desk>
        <Scroll>
          <ScrollButton aria-label="向上滚动"><Icon w={6} h={4}><path d="M0 4h6L3 0z" fill="#777" stroke="none" /></Icon></ScrollButton>
          <ScrollButton $end aria-label="向下滚动"><Caret c="#666" /></ScrollButton>
          <ScrollButton aria-label="上一页"><Icon w={6} h={8}><path d="M0 3.500h6L3 0zM0 8h6L3 4.500z" fill="#a2a2a2" stroke="none" /></Icon></ScrollButton>
          <ScrollButton aria-label="下一页"><Icon w={6} h={8}><path d="M0 0h6L3 3.500zM0 4.500h6L3 8z" fill="#a2a2a2" stroke="none" /></Icon></ScrollButton>
        </Scroll>
      </Stage>
      <Notes>
        <Icon><path d="M.5 15V2A1.500 1.500 0 0 1 2 .5h12A1.500 1.500 0 0 1 15.500 2v9a1.500 1.500 0 0 1-1.500 1.500H3zM4 4.500h8M4 6.500h8M4 8.500h5" /></Icon>
        <NotesInput aria-label="备注" placeholder="单击此处添加备注" />
      </Notes>
    </Center>
  );
}

const PropLine = ({ id, label }: { id: string; label: string }) => (
  <PropRow>
    <PropLabel htmlFor={id}><Icon w={5} h={10}><path d="M0 0v10l5-5z" fill="#888" stroke="none" /></Icon>{label}</PropLabel>
    <PropSelect><PlainSelect id={id} $center><option>无</option></PlainSelect><Caret c="#555" /></PropSelect>
  </PropRow>
);

function PropertiesPane() {
  return (
    <Props>
      <PropsHead>
        <Label>对象属性<Caret /></Label>
        <button aria-label="关闭"><Icon w={10} c="#777"><path d="M.5.5l9 9M9.500.5l-9 9" /></Icon></button>
      </PropsHead>
      <PropsTabs><PropsTab $on>形状选项</PropsTab><PropsTab>文本选项</PropsTab></PropsTabs>
      <SubTabs>
        <SubTab><Icon w={20} c="#222"><path d="M1.500 7.500h12M1.500 9L11 1l5 5.500M1.500 9l8 10 6-5.500" /><path d="M17.500 7.500h2v12h-2z" stroke={BLUE} /></Icon>填充与线条</SubTab>
        <SubTab $on><Icon w={20} c="#222"><path d="M11 18.500H.5v-17h19V9" /><path d="M15.500 8v8M11.500 12h8M12 15v4M10 17h4M18 15v4M16 17h4" stroke={BLUE} /></Icon>效果</SubTab>
        <SubTab><Icon w={20} c="#222"><rect x="4.500" y="4.500" width="15" height="15" strokeDasharray="2 1" /><path d="M4 1.500h16M4.500 0v3M19.500 0v3M1.500 4v16M0 4.500h3M0 19.500h3" stroke={BLUE} /></Icon>大小与属性</SubTab>
      </SubTabs>
      <PropLine id="shadow" label="阴影" />
      <PropLine id="reflection" label="倒影" />
    </Props>
  );
}

function StatusBar() {
  return (
    <Status>
      <StatusText $w={89}>幻灯片 1 / 1</StatusText>
      <StatusText $w={84}>Office 主题</StatusText>
      <StatusTools>
        <Tool $w={34} aria-label="备注选项"><Icon><path d="M0 2.500h16M0 6.500h16M0 10.500h16" /><path d="M10 12h6l-3 3z" fill={INK} stroke="none" /></Icon><Caret /></Tool>
        <Tool $on aria-label="普通视图"><Icon><rect x=".5" y="1.500" width="15" height="13" rx="1" /><path d="M4.500 2v12M5 11.500h10" /></Icon></Tool>
        <Tool $w={26} aria-label="幻灯片浏览"><Icon><rect x=".5" y="1.500" width="5" height="5" rx="1" /><rect x="10.500" y="1.500" width="5" height="5" rx="1" /><rect x=".5" y="9.500" width="5" height="5" rx="1" /><rect x="10.500" y="9.500" width="5" height="5" rx="1" /></Icon></Tool>
        <Tool aria-label="阅读视图"><Icon><path d="M8 3C6 1.500 3 1.500.5 1.500v12c3 0 6 0 7.500 1.500 1.500-1.500 4.500-1.500 7.500-1.500v-12C13 1.500 10 1.500 8 3zM8 3v12" /></Icon></Tool>
        <Tool $w={28} aria-label="演讲者视图"><Icon><path d="M2 3.500l2-2h6l2 2-2 2H5M.5 8.500V14l1 1h9l1-1v-2l4 2V7l-4 2V6.500l-1-1M.500 8.500h7M4 11.500h4" /></Icon></Tool>
        <ShowButton aria-label="放映"><Icon w={10} h={12}><path d="M0 0v12l9-6z" fill="#fff" stroke="none" /></Icon></ShowButton>
        <Tool $w={16} aria-label="放映选项"><Caret /></Tool>
        <Tool $w={62} aria-label="缩放比例">101% <Caret /></Tool>
        <Tool $w={20} aria-label="缩小"><Icon w={12} c="#444" sw={2}><path d="M0 6h12" /></Icon></Tool>
        <ZoomSlider type="range" min={0} max={100} defaultValue={48} aria-label="缩放" />
        <Tool $w={16} aria-label="放大"><Icon w={12} c="#444" sw={2}><path d="M0 6h12M6 0v12" /></Icon></Tool>
        <Tool $w={24} aria-label="适应窗口"><Icon w={12} c="#555"><path d="M.5 4V.5H4M8 .5h3.500V4M11.500 8v3.500H8M4 11.500H.5V8M6 3v6M3 6h6" /></Icon></Tool>
      </StatusTools>
    </Status>
  );
}

function Overlays() {
  return (
    <>
      <Activate><ActivateTitle>激活 Windows</ActivateTitle>转到“设置”以激活 Windows。</Activate>
      <Ime>
        <ImeLogo>
          <svg width="32" height="32" viewBox="0 0 32 32" aria-hidden="true">
            <path d="M3 4L24 .5q2 0 3 2L31.500 24q0 2-2 3L9 31.500q-2 0-3-2L.5 7q0-2 2.500-3z" fill="#f2521b" />
            <path d="M25 8C16 6 8 7 8 12c0 5 16 3 16 8 0 4-9 5-15 3" fill="none" stroke="#fff" strokeWidth="4.500" strokeLinecap="round" />
          </svg>
        </ImeLogo>
        <ImeButton>中</ImeButton>
        <ImeButton aria-label="标点"><Icon w={14} c="#0a6cd4" sw={2}><circle cx="4" cy="4" r="2" strokeWidth="1.500" /><path d="M10 7h2v2l-2 3" strokeWidth="2.500" /></Icon></ImeButton>
        <ImeButton aria-label="语音"><Icon w={14} h={16} c="#0a6cd4" sw={2}><rect x="5" y="1" width="4" height="8" rx="2" fill="#0a6cd4" /><path d="M2 7c0 6 10 6 10 0M5 15h4M7 12v3" /></Icon></ImeButton>
        <ImeButton aria-label="键盘"><Icon w={16} h={14} c="#0a6cd4"><rect x="1" y="1.500" width="14" height="11" rx="1" strokeWidth="1.500" /><path d="M3 4.500h2M6 4.500h2M9 4.500h2M12 4.500h1M3 7h2M6 7h2M9 7h2M12 7h1M4 10h8" strokeWidth="1.500" /></Icon></ImeButton>
        <ImeButton aria-label="工具箱"><Icon w={14} c="#0a6cd4" sw={0}><rect x="1" y="1" width="5.500" height="5.500" rx="2" fill="#0a6cd4" /><rect x="8" y="1" width="5.500" height="5.500" rx="2.700" fill="#0a6cd4" /><rect x="1" y="8" width="5.500" height="5.500" rx="1.500" fill="#0a6cd4" /><rect x="8" y="8" width="5.500" height="5.500" rx="1.500" fill="#0a6cd4" /></Icon></ImeButton>
      </Ime>
      <Stamp>
        <svg width="45" height="42" viewBox="0 0 45 42" aria-hidden="true">
          <path d="M43 1C22 0 4 8 1 21c-1 7 3 10 8 10C5 20 18 6 43 1z" fill="#3f97d3" />
          <path d="M34 4C20 8 9 17 11 29c4-10 12-18 23-25z" fill="#63c0e8" />
          <path d="M25 13c14-1 20 6 14 14-6 9-20 12-30 13 14-4 26-11 25-18-1-5-5-7-9-9z" fill="#6cbf63" />
          <path d="M31 18c3 8-8 14-18 16 10 1 22-6 21-12z" fill="#8fd08a" />
          <path d="M4 38c8-1 14-3 20-6-4 5-10 7-16 7z" fill="#d8d35c" />
          <path d="M12 28c0-8 6-14 12-15l-2 5c-4 1-6 5-5 10z" fill="#3a7fc1" />
        </svg>
        <div><StampName>{CELL}</StampName><StampUrl>www.xz7.com</StampUrl></div>
      </Stamp>
    </>
  );
}

export default function App() {
  return (
    <>
      <Global />
      <Shell>
        <Title />
        <Menu />
        <RibbonBar />
        <Work>
          <OutlinePane />
          <Canvas />
          <PropertiesPane />
          <Rail>
            <RailGrip />
            {RAIL.map(r => <RailButton key={r.name} $on={r.on} aria-label={r.name}>{r.icon}</RailButton>)}
            <RailRule />
            <RailButton aria-label="更多"><Icon w={14} h={4} c="#888"><circle cx="2" cy="2" r="1" /><circle cx="7" cy="2" r="1" /><circle cx="12" cy="2" r="1" /></Icon></RailButton>
          </Rail>
        </Work>
        <StatusBar />
        <Overlays />
      </Shell>
    </>
  );
}
